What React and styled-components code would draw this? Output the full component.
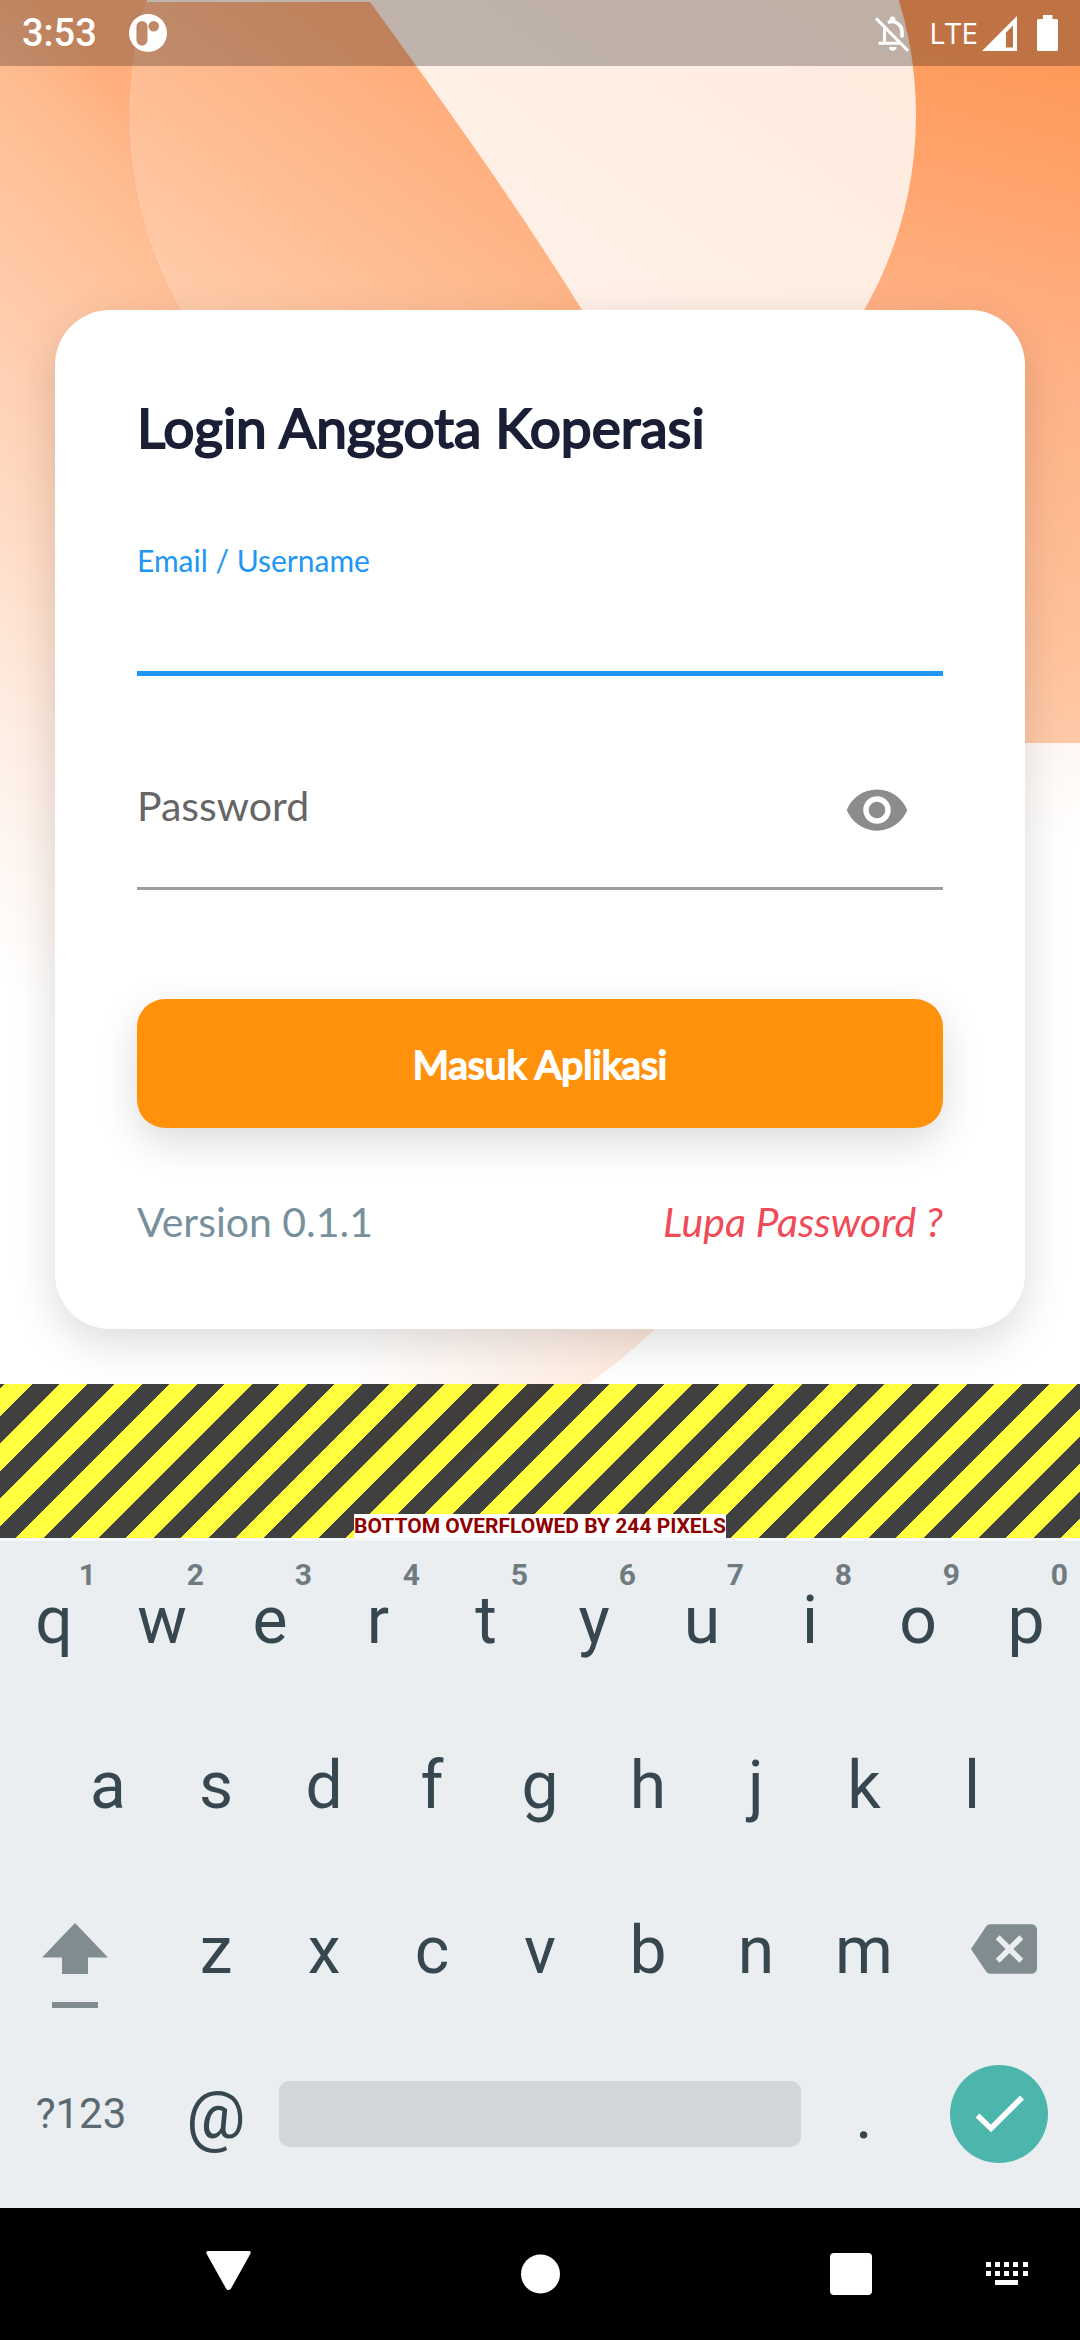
import React, { useState } from 'react';
import styled, { createGlobalStyle } from 'styled-components';

const GlobalStyle = createGlobalStyle`
  *, *::before, *::after { box-sizing: border-box; }
  html, body { margin: 0; background: #000; }
  button, input { margin: 0; padding: 0; border: 0; background: none; font: inherit; color: inherit; outline: none; }
  button { cursor: pointer; }
  svg { display: block; }
`;

const Page = styled.div`
  display: flex;
  flex-direction: column;
  min-height: 100vh;
  background: #fff;
  font-family: Lato, "Liberation Sans", sans-serif;
`;

/* ---------- status bar ---------- */

const StatusBar = styled.header`
  display: flex;
  align-items: center;
  justify-content: space-between;
  height: 66px;
  padding: 0 22px;
  background: rgba(0, 0, 0, 0.25);
  color: #fff;
`;

const StatusGroup = styled.div`
  display: flex;
  align-items: center;
  gap: ${(p) => p.$gap}px;
`;

const Clock = styled.time`
  font: 500 38px/44px Roboto, sans-serif;
`;

const Network = styled.span`
  display: flex;
  align-items: center;
  gap: 4px;
  font: 400 30px/44px "Open Sans", sans-serif;
`;

/* ---------- login ---------- */

const Screen = styled.div`
  position: relative;
  z-index: 0;
  flex: 1;
  display: flex;
  flex-direction: column;
`;

const Backdrop = styled.svg`
  position: absolute;
  inset: 0;
  z-index: -1;
  width: 100%;
  height: 100%;
`;

const Main = styled.main`
  flex: 1;
  padding: 244px 55px 55px;
`;

const Card = styled.form`
  display: flex;
  flex-direction: column;
  padding: 82px 82px 84px;
  border-radius: 55px;
  background: #fff;
  box-shadow: 0 14px 44px rgba(0, 0, 0, 0.14);
`;

const Title = styled.h1`
  margin: 0 0 80px;
  font-size: 55px;
  line-height: 70px;
  font-weight: 400;
  color: #1a1f36;
  -webkit-text-stroke: 2px #1a1f36;
`;

const EmailField = styled.div`
  display: flex;
  flex-direction: column;
  border-bottom: 5px solid #2196f3;
`;

const EmailLabel = styled.label`
  font-size: 30px;
  line-height: 36px;
  color: #2196f3;
`;

const EmailInput = styled.input`
  height: 93px;
  font-size: 41px;
  color: #222;
`;

const PasswordField = styled.div`
  display: flex;
  align-items: center;
  height: 158px;
  margin-top: 56px;
  border-bottom: 3px solid #9c9c9c;
`;

const PasswordLabel = styled.label`
  padding-bottom: 8px;
  font-size: 41px;
  line-height: 46px;
  color: #666;
`;

const PasswordInput = styled.input`
  flex: 1;
  min-width: 0;
  height: 100px;
  font-size: 41px;
`;

const EyeButton = styled.button`
  display: grid;
  place-items: center;
  width: 132px;
  height: 132px;
  color: #8c8c8c;
`;

const SubmitButton = styled.button`
  height: 129px;
  margin-top: 109px;
  border-radius: 28px;
  background: #ff910b;
  box-shadow: 0 14px 40px rgba(0, 0, 0, 0.14);
  font-size: 39px;
  line-height: 46px;
  color: #fff;
  -webkit-text-stroke: 2px #fff;
`;

const CardFooter = styled.div`
  display: flex;
  justify-content: space-between;
  margin-top: 71px;
  font-size: 41px;
  line-height: 46px;
`;

const Version = styled.span`
  color: #78909c;
`;

const ForgotLink = styled.a`
  font-style: italic;
  color: #ee4c58;
  text-decoration: none;
`;

const OverflowBanner = styled.div`
  display: flex;
  justify-content: center;
  align-items: flex-end;
  height: 154px;
  background: linear-gradient(
      135deg,
      rgba(0, 0, 0, 0.75) 25%,
      rgba(255, 255, 0, 0.75) 25% 50.3%,
      rgba(0, 0, 0, 0.75) 50.3% 75%,
      rgba(255, 255, 0, 0.75) 75%
    )
    32px 0 / 55px 55px;
`;

const OverflowText = styled.span`
  background: #fff;
  font: 700 21px/24px Roboto, sans-serif;
  color: #900000;
`;

/* ---------- keyboard ---------- */

const Keyboard = styled.div`
  display: flex;
  flex-direction: column;
  gap: 10px;
  padding-bottom: 17px;
  border-top: 3px solid #f4f7f9;
  background: #eaeef1;
  font-family: Roboto, sans-serif;
  color: #37474f;
`;

const KeyRow = styled.div`
  display: grid;
  grid-template-columns: ${(p) => p.$columns};
  height: 155px;
  padding: 0 ${(p) => p.$inset || 0};
`;

const Key = styled.button`
  position: relative;
  display: flex;
  align-items: center;
  justify-content: center;
  padding-top: 4px;
  font-size: 66px;
  line-height: 78px;
`;

const Hint = styled.span`
  position: absolute;
  top: 16px;
  right: 12px;
  font-size: 30px;
  line-height: 36px;
  font-weight: 700;
  color: #6f7b80;
`;

const SymbolsKey = styled(Key)`
  padding: 0;
  font-size: 42px;
  line-height: 48px;
  color: #5b6a71;
`;

const IconKey = styled(Key)`
  padding: 0 ${(p) => p.$right || 0} 0 ${(p) => p.$left || 0};
  color: #818c90;
`;

const SpaceKey = styled.button`
  align-self: center;
  height: 66px;
  margin: 0 9px;
  border-radius: 10px;
  background: #d1d6d9;
`;

/* ---------- navigation bar ---------- */

const NavBar = styled.nav`
  display: flex;
  align-items: center;
  gap: 114px;
  height: 132px;
  padding: 0 52px 0 206px;
  background: #000;
  color: #fff;
`;

const NavGroup = styled.div`
  flex: 1;
  display: flex;
  justify-content: space-between;
`;

const NavButton = styled.button`
  display: block;
`;

/* ---------- drawings ---------- */

const Artwork = () => (
  <Backdrop viewBox="0 0 1080 1538" preserveAspectRatio="none" aria-hidden="true">
    <defs>
      <linearGradient id="right" gradientUnits="userSpaceOnUse" x1="50" y1="-194" x2="-115" y2="446">
        <stop offset="0" stopColor="#ff995a" />
        <stop offset="0.34" stopColor="#ffac7b" />
        <stop offset="0.41" stopColor="#ffb083" />
        <stop offset="0.85" stopColor="#ffc29c" />
        <stop offset="1" stopColor="#ffcaa9" />
      </linearGradient>
      <linearGradient id="outer" gradientUnits="userSpaceOnUse" x1="17" y1="-18" x2="-487" y2="494">
        <stop offset="0" stopColor="#ffae7c" />
        <stop offset="0.1" stopColor="#ffbc91" />
        <stop offset="0.355" stopColor="#ffcdae" />
        <stop offset="0.527" stopColor="#ffdac3" />
        <stop offset="0.743" stopColor="#feede3" />
        <stop offset="1" stopColor="#ffffff" />
      </linearGradient>
      <linearGradient id="inner" gradientUnits="userSpaceOnUse" x1="114" y1="-152" x2="-84" y2="112">
        <stop offset="0" stopColor="#ffad7b" />
        <stop offset="1" stopColor="#ffccab" />
      </linearGradient>
      <linearGradient id="cream" gradientUnits="userSpaceOnUse" x1="860" y1="40" x2="600" y2="400">
        <stop offset="0" stopColor="#ffebde" />
        <stop offset="1" stopColor="#fff2ea" />
      </linearGradient>
      <linearGradient id="fade" x1="0" y1="0" x2="0" y2="1">
        <stop offset="0" stopColor="#fff8f4" />
        <stop offset="1" stopColor="#ffffff" />
      </linearGradient>
      <linearGradient id="wedge" gradientUnits="userSpaceOnUse" x1="370" y1="1310" x2="620" y2="1400">
        <stop offset="0" stopColor="#ffffff" />
        <stop offset="1" stopColor="#feeade" />
      </linearGradient>
      <clipPath id="disc">
        <circle cx="523" cy="115" r="393" />
      </clipPath>
    </defs>
    <rect x="500" width="580" height="743" fill="url(#right)" />
    <rect x="800" y="743" width="280" height="100" fill="url(#fade)" />
    <path d="M0 0H369C450 112 520 210 582 310C650 430 640 1100 560 1200H0Z" fill="url(#outer)" />
    <circle cx="523" cy="115" r="393" fill="url(#cream)" />
    <path clipPath="url(#disc)" d="M0 2H370C450 112 520 210 582 310L640 520H0Z" fill="url(#inner)" />
    <path d="M655 1329Q620 1362 588 1384Q530 1426 440 1470L300 1480L350 1300H670Z" fill="url(#wedge)" />
  </Backdrop>
);

const ParrotIcon = () => (
  <svg width="38" height="38" viewBox="0 0 38 38" fill="currentColor">
    <path
      fillRule="evenodd"
      d="M19 0a19 19 0 1 0 0 38a19 19 0 1 0 0-38zM13 7a5.5 5.5 0 0 1 5.5 5.5v13.7a5.5 5.5 0 0 1-11 0v-13.7a5.5 5.5 0 0 1 5.5-5.5zM24.7 7a5.3 5.3 0 1 1 0 10.6a5.3 5.3 0 1 1 0-10.6z"
    />
  </svg>
);

const BellOffIcon = () => (
  <svg width="34" height="37" viewBox="0 0 34 37" fill="none" stroke="currentColor" strokeWidth="3">
    <path d="M1 3.3L33 35.8" />
    <path d="M3.5 28.3H25M9.5 29V14.5q0-1.500 1-3.500" />
    <path d="M13 7.5Q17.5 5.5 21 7.5Q27 10.5 27 17V22.5" strokeWidth="3.5" />
    <circle cx="17.5" cy="4.3" r="2.8" fill="currentColor" stroke="none" />
    <path d="M14 32h7.5a3.7 3.7 0 0 1-7.5 0z" fill="currentColor" stroke="none" />
  </svg>
);

const SignalIcon = () => (
  <svg width="35" height="35" viewBox="0 0 35 35" fill="currentColor">
    <path fillRule="evenodd" d="M0 35L35 0V35ZM24 16.500V31.500H31V9.500Z" />
  </svg>
);

const BatteryIcon = () => (
  <svg width="21" height="36" viewBox="0 0 21 36" fill="currentColor">
    <path d="M6 0H15.500V4H19.500Q21 4 21 5.500V34.500Q21 36 19.500 36H1.500Q0 36 0 34.500V5.500Q0 4 1.500 4H6Z" />
  </svg>
);

const EyeIcon = () => (
  <svg width="66" height="66" viewBox="0 0 24 24" fill="currentColor">
    <path d="M12 4.5C7 4.5 2.730 7.610 1 12c1.730 4.390 6 7.500 11 7.500s9.270-3.110 11-7.500c-1.730-4.390-6-7.500-11-7.500zM12 17c-2.760 0-5-2.240-5-5s2.240-5 5-5 5 2.240 5 5-2.240 5-5 5zm0-8c-1.660 0-3 1.340-3 3s1.340 3 3 3 3-1.340 3-3-1.340-3-3-3z" />
  </svg>
);

const ShiftIcon = () => (
  <svg width="66" height="120" viewBox="0 0 66 120" fill="currentColor">
    <path d="M33 34L66 68.500H46V85H20V68.500H0Z" />
    <path d="M10 113H56V119H10Z" />
  </svg>
);

const BackspaceIcon = () => (
  <svg width="66" height="66" viewBox="0 0 24 24" fill="currentColor">
    <path d="M22 3H7c-.69 0-1.230.35-1.590.88L0 12l5.410 8.110c.36.53.9.89 1.590.89h15c1.100 0 2-.9 2-2V5c0-1.100-.9-2-2-2zm-3 12.590L17.590 17 14 13.410 10.410 17 9 15.590 12.590 12 9 8.410 10.410 7 14 10.590 17.590 7 19 8.410 15.410 12 19 15.590z" />
  </svg>
);

const EnterIcon = () => (
  <svg width="98" height="98" viewBox="0 0 98 98">
    <circle cx="49" cy="49" r="49" fill="#4db6ac" />
    <path d="M27.500 50.500L41 63.500L72 32.500" fill="none" stroke="#fff" strokeWidth="5.500" />
  </svg>
);

const BackIcon = () => (
  <svg width="45" height="42" viewBox="0 0 45 42" fill="currentColor" overflow="visible">
    <path d="M2.500 -2H42.500Q46 -2 44 1.500L25 35.500Q22.500 38.500 20 35.500L1 1.500Q-1 -2 2.500 -2Z" />
  </svg>
);

const HomeIcon = () => (
  <svg width="39" height="42" viewBox="0 0 39 42" fill="currentColor">
    <circle cx="19.500" cy="21" r="19.500" />
  </svg>
);

const OverviewIcon = () => (
  <svg width="42" height="42" viewBox="0 0 42 42" fill="currentColor">
    <rect width="42" height="42" rx="4" />
  </svg>
);

const KeyboardIcon = () => (
  <svg width="42" height="24" viewBox="0 0 42 24" fill="currentColor">
    {[0, 9, 18, 27, 37].map((x) => (
      <path key={x} d={`M${x} 0h5v5h-5zM${x} 9h5v5h-5z`} />
    ))}
    <path d="M9 18h23v5H9z" />
  </svg>
);

/* ---------- app ---------- */

const TOP_ROW = [...'qwertyuiop'];
const HOME_ROW = [...'asdfghjkl'];
const BOTTOM_ROW = [...'zxcvbnm'];

export default function App() {
  const [email, setEmail] = useState('');
  const [password, setPassword] = useState('');
  const [visible, setVisible] = useState(false);
  const type = (char) => () => setEmail((value) => value + char);

  return (
    <Page>
      <GlobalStyle />
      <Screen>
        <Artwork />
        <StatusBar>
          <StatusGroup $gap={32}>
            <Clock>3:53</Clock>
            <ParrotIcon />
          </StatusGroup>
          <StatusGroup $gap={20}>
            <BellOffIcon />
            <Network>
              LTE
              <SignalIcon />
            </Network>
            <BatteryIcon />
          </StatusGroup>
        </StatusBar>
        <Main>
          <Card onSubmit={(e) => e.preventDefault()}>
            <Title>Login Anggota Koperasi</Title>
            <EmailField>
              <EmailLabel htmlFor="email">Email / Username</EmailLabel>
              <EmailInput id="email" value={email} onChange={(e) => setEmail(e.target.value)} />
            </EmailField>
            <PasswordField>
              <PasswordLabel htmlFor="password">Password</PasswordLabel>
              <PasswordInput
                id="password"
                type={visible ? 'text' : 'password'}
                value={password}
                onChange={(e) => setPassword(e.target.value)}
              />
              <EyeButton type="button" aria-label="Password" onClick={() => setVisible(!visible)}>
                <EyeIcon />
              </EyeButton>
            </PasswordField>
            <SubmitButton type="submit">Masuk Aplikasi</SubmitButton>
            <CardFooter>
              <Version>Version 0.1.1</Version>
              <ForgotLink href="#lupa">Lupa Password ?</ForgotLink>
            </CardFooter>
          </Card>
        </Main>
        <OverflowBanner>
          <OverflowText>BOTTOM OVERFLOWED BY 244 PIXELS</OverflowText>
        </OverflowBanner>
      </Screen>
      <Keyboard>
        <KeyRow $columns="repeat(10, 1fr)">
          {TOP_ROW.map((char, i) => (
            <Key key={char} type="button" onClick={type(char)}>
              {char}
              <Hint>{(i + 1) % 10}</Hint>
            </Key>
          ))}
        </KeyRow>
        <KeyRow $columns="repeat(9, 1fr)" $inset="5%">
          {HOME_ROW.map((char) => (
            <Key key={char} type="button" onClick={type(char)}>
              {char}
            </Key>
          ))}
        </KeyRow>
        <KeyRow $columns="3fr repeat(7, 2fr) 3fr">
          <IconKey type="button" aria-label="Shift" $right="12px">
            <ShiftIcon />
          </IconKey>
          {BOTTOM_ROW.map((char) => (
            <Key key={char} type="button" onClick={type(char)}>
              {char}
            </Key>
          ))}
          <IconKey type="button" aria-label="Backspace" $left="10px" onClick={() => setEmail(email.slice(0, -1))}>
            <BackspaceIcon />
          </IconKey>
        </KeyRow>
        <KeyRow $columns="3fr 2fr 10fr 2fr 3fr">
          <SymbolsKey type="button">?123</SymbolsKey>
          <Key type="button" onClick={type('@')}>@</Key>
          <SpaceKey type="button" aria-label="Space" onClick={type(' ')} />
          <Key type="button" onClick={type('.')}>.</Key>
          <IconKey type="button" aria-label="Enter">
            <EnterIcon />
          </IconKey>
        </KeyRow>
      </Keyboard>
      <NavBar>
        <NavGroup>
          <NavButton type="button" aria-label="Back"><BackIcon /></NavButton>
          <NavButton type="button" aria-label="Home"><HomeIcon /></NavButton>
          <NavButton type="button" aria-label="Overview"><OverviewIcon /></NavButton>
        </NavGroup>
        <NavButton type="button" aria-label="Keyboard"><KeyboardIcon /></NavButton>
      </NavBar>
    </Page>
  );
}
